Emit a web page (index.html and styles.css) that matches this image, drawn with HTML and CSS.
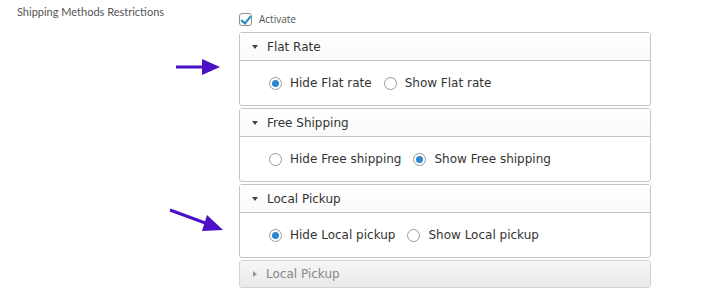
FILE: index.html
```html
<!DOCTYPE html>
<html lang="en">
<head>
    <meta charset="UTF-8">
    <title>Shipping Methods Restrictions</title>
    <link rel="stylesheet" href="styles.css">
</head>
<body>
    <div class="form-row">
        <div class="row-label">Shipping Methods Restrictions</div>
        <div class="row-field">
            <label class="activate">
                <span class="checkbox checked"></span>
                Activate
            </label>

            <div class="accordion">
                <div class="panel">
                    <div class="panel-head"><span class="caret"></span>Flat Rate</div>
                    <div class="panel-body">
                        <span class="radio on"></span><span class="opt">Hide Flat rate</span>
                        <span class="radio"></span><span class="opt">Show Flat rate</span>
                    </div>
                </div>

                <div class="panel">
                    <div class="panel-head"><span class="caret"></span>Free Shipping</div>
                    <div class="panel-body">
                        <span class="radio"></span><span class="opt">Hide Free shipping</span>
                        <span class="radio on"></span><span class="opt">Show Free shipping</span>
                    </div>
                </div>

                <div class="panel">
                    <div class="panel-head"><span class="caret"></span>Local Pickup</div>
                    <div class="panel-body">
                        <span class="radio on"></span><span class="opt">Hide Local pickup</span>
                        <span class="radio"></span><span class="opt">Show Local pickup</span>
                    </div>
                </div>

                <div class="panel collapsed">
                    <div class="panel-head"><span class="caret"></span>Local Pickup</div>
                </div>
            </div>
        </div>
    </div>

    <!-- annotation arrows -->
    <svg class="arrow arrow-one" width="50" height="20" viewBox="0 0 50 20">
        <line x1="0" y1="10" x2="28" y2="10" stroke="#4a10c6" stroke-width="3"/>
        <polygon points="26,2 44,10 26,18" fill="#4a10c6"/>
    </svg>
    <svg class="arrow arrow-two" width="60" height="30" viewBox="0 0 60 30">
        <line x1="2" y1="2" x2="40" y2="16" stroke="#4a10c6" stroke-width="3"/>
        <polygon points="39,7 55,22 34,23" fill="#4a10c6"/>
    </svg>
</body>
</html>
```

FILE: styles.css
```css
* {
    margin: 0;
    padding: 0;
    box-sizing: border-box;
}

body {
    font-family: 'DejaVu Sans', Verdana, sans-serif;
    background: #fff;
    color: #333;
    width: 703px;
    height: 295px;
    overflow: hidden;
    position: relative;
}

.form-row {
    display: flex;
    padding-top: 4px;
}

.row-label {
    width: 239px;
    padding-left: 17px;
    font-family: Lato, 'Open Sans', sans-serif;
    font-size: 11px;
    color: #555;
    line-height: 15px;
}

.row-field {
    width: 412px;
}

.activate {
    display: flex;
    align-items: center;
    gap: 7px;
    height: 18px;
    margin-top: 6px;
    font-family: 'Open Sans', sans-serif;
    font-size: 10px;
    color: #555;
}

.checkbox {
    width: 13px;
    height: 13px;
    border: 1px solid #8c8f94;
    border-radius: 3px;
    position: relative;
    background: #fff;
}

.checkbox.checked::after {
    content: "";
    position: absolute;
    left: 3px;
    top: 0;
    width: 4px;
    height: 8px;
    border: solid #1e8cbe;
    border-width: 0 2px 2px 0;
    transform: rotate(40deg);
}

.accordion {
    margin-top: 4px;
    display: flex;
    flex-direction: column;
    gap: 2px;
}

.panel {
    border: 1px solid #c5c5c5;
    border-radius: 3px;
    background: #fff;
}

.panel-head {
    height: 28px;
    display: flex;
    align-items: center;
    padding-left: 12px;
    font-size: 12px;
    color: #333;
    border-bottom: 1px solid #c5c5c5;
    background: linear-gradient(#fff, #fafafa);
}

.caret {
    width: 0;
    height: 0;
    border-left: 3px solid transparent;
    border-right: 3px solid transparent;
    border-top: 4px solid #444;
    margin-right: 9px;
}

.panel-body {
    height: 44px;
    display: flex;
    align-items: center;
    padding-left: 29px;
    font-size: 12px;
    color: #333;
}

.radio {
    width: 13px;
    height: 13px;
    border: 1px solid #999;
    border-radius: 50%;
    position: relative;
    margin-right: 8px;
    background: #fff;
}

.radio.on::after {
    content: "";
    position: absolute;
    left: 2px;
    top: 2px;
    width: 7px;
    height: 7px;
    border-radius: 50%;
    background: #2f86d0;
}

.opt {
    margin-right: 12px;
}

.collapsed {
    border-color: #d3d3d3;
}

.collapsed .panel-head {
    border-bottom: none;
    background: linear-gradient(#f6f6f6, #e9e9e9);
    color: #888;
    height: 26px;
}

.collapsed .caret {
    border-top: 3px solid transparent;
    border-bottom: 3px solid transparent;
    border-left: 4px solid #999;
    border-right: none;
    margin-left: 1px;
    margin-right: 9px;
}

.arrow {
    position: absolute;
}

.arrow-one {
    left: 176px;
    top: 57px;
}

.arrow-two {
    left: 168px;
    top: 208px;
}
```
